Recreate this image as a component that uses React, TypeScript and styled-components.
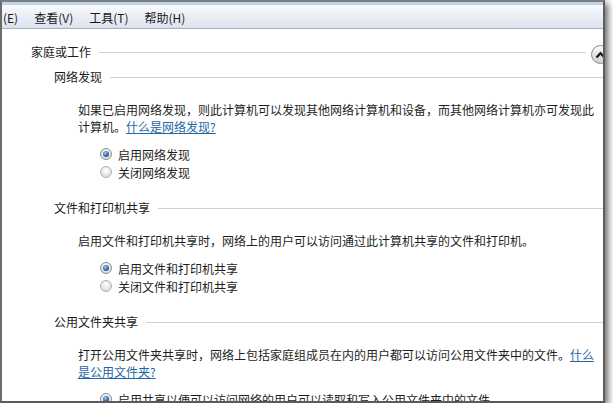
import React from "react";
import styled, { createGlobalStyle } from "styled-components";

const Global = createGlobalStyle`
  html, body { margin: 0; padding: 0; background: #ffffff; }
  body {
    font-family: "Noto Sans CJK SC", "Microsoft YaHei", "Noto Sans", sans-serif;
    font-size: 12px;
    color: #1e1e1e;
  }
`;

const Frame = styled.div`
  width: 605px;
  height: 403px;
  box-sizing: border-box;
  border-top: 2px solid #7d7d7d;
  border-left: 2px solid #6b6b6b;
  border-right: 2px solid #5e5e5e;
  border-bottom: 2px solid #5a5a5a;
  box-shadow: 3px 3px 7px rgba(0, 0, 0, 0.6);
  overflow: hidden;
  display: flex;
  flex-direction: column;
  background: #ffffff;
`;

const MenuBar = styled.div`
  height: 27px;
  flex: none;
  box-sizing: border-box;
  border-top: 3px solid #bfd3ea;
  border-bottom: 1px solid #a9b0ba;
  background: linear-gradient(#f8fafd, #dce2ee);
  display: flex;
  align-items: center;
  gap: 16px;
  padding: 3px 0 0 1px;
`;

const MenuItem = styled.span`
  color: #1a1a1a;
  line-height: 16px;
  white-space: nowrap;
`;

const Content = styled.div`
  display: flex;
  flex-direction: column;
  padding: 13px 0 0 29px;
`;

const HeaderRow = styled.div`
  display: flex;
  align-items: center;
  height: 20px;
`;

const Title = styled.span`
  color: #1a1a1a;
  white-space: nowrap;
  line-height: 20px;
`;

const Rule = styled.div`
  flex: 1;
  height: 1px;
  background: #d0d0d0;
  margin-left: 8px;
`;

const Collapse = styled.div`
  flex: none;
  width: 19px;
  height: 19px;
  box-sizing: border-box;
  border-radius: 50%;
  border: 1px solid #8c8c8c;
  background: linear-gradient(#fbfbfb, #cfcfcf);
  margin: 5px -7px 0 5px;
  display: flex;
  align-items: center;
  justify-content: center;
`;

const SubSections = styled.div`
  display: flex;
  flex-direction: column;
  gap: 17px;
  margin: 5px 0 0 23px;
`;

const SubSection = styled.div`
  display: flex;
  flex-direction: column;
`;

const Para = styled.div`
  margin: 14px 0 0 24px;
  line-height: 17px;
  white-space: nowrap;
  color: #1e1e1e;
`;

const Link = styled.span`
  color: #1f67a6;
  text-decoration: underline;
`;

const RadioList = styled.div`
  display: flex;
  flex-direction: column;
  margin: 10px 0 0 46px;
`;

const RadioRow = styled.div`
  display: flex;
  align-items: center;
  height: 18px;
  gap: 6px;
  white-space: nowrap;
`;

const RadioCircle = styled.span<{ $checked?: boolean }>`
  flex: none;
  width: 12px;
  height: 12px;
  box-sizing: border-box;
  border-radius: 50%;
  border: 1px solid ${(p) => (p.$checked ? "#8a8c8f" : "#b2b2b2")};
  background: radial-gradient(circle at 50% 35%, #ffffff, #d2d2d2);
  display: flex;
  align-items: center;
  justify-content: center;
  &::after {
    content: "";
    display: ${(p) => (p.$checked ? "block" : "none")};
    width: 6px;
    height: 6px;
    border-radius: 50%;
    background: radial-gradient(circle at 40% 35%, #a9cdf0, #2f65a5 55%, #1a3e6e);
  }
`;

const Radio = ({ checked, label }: { checked?: boolean; label: string }) => (
  <RadioRow>
    <RadioCircle $checked={checked} />
    <span>{label}</span>
  </RadioRow>
);

const SubHeading = ({ title }: { title: string }) => (
  <HeaderRow>
    <Title>{title}</Title>
    <Rule />
  </HeaderRow>
);

export default function App() {
  return (
    <>
      <Global />
      <Frame>
        <MenuBar>
          <MenuItem>(E)</MenuItem>
          <MenuItem>查看(V)</MenuItem>
          <MenuItem>工具(T)</MenuItem>
          <MenuItem>帮助(H)</MenuItem>
        </MenuBar>
        <Content>
          <HeaderRow>
            <Title>家庭或工作</Title>
            <Rule />
            <Collapse>
              <svg width="11" height="8" viewBox="0 0 11 8">
                <path d="M1.5 6.5 L5.5 2.2 L9.5 6.5" fill="none" stroke="#1a1a1a" strokeWidth="2.3" />
              </svg>
            </Collapse>
          </HeaderRow>
          <SubSections>
            <SubSection>
              <SubHeading title="网络发现" />
              <Para>
                如果已启用网络发现，则此计算机可以发现其他网络计算机和设备，而其他网络计算机亦可发现此
                <br />
                计算机。<Link>什么是网络发现?</Link>
              </Para>
              <RadioList>
                <Radio checked label="启用网络发现" />
                <Radio label="关闭网络发现" />
              </RadioList>
            </SubSection>
            <SubSection>
              <SubHeading title="文件和打印机共享" />
              <Para>启用文件和打印机共享时，网络上的用户可以访问通过此计算机共享的文件和打印机。</Para>
              <RadioList>
                <Radio checked label="启用文件和打印机共享" />
                <Radio label="关闭文件和打印机共享" />
              </RadioList>
            </SubSection>
            <SubSection>
              <SubHeading title="公用文件夹共享" />
              <Para>
                打开公用文件夹共享时，网络上包括家庭组成员在内的用户都可以访问公用文件夹中的文件。
                <Link>
                  什么
                  <br />
                  是公用文件夹?
                </Link>
              </Para>
              <RadioList>
                <Radio checked label="启用共享以便可以访问网络的用户可以读取和写入公用文件夹中的文件" />
              </RadioList>
            </SubSection>
          </SubSections>
        </Content>
      </Frame>
    </>
  );
}
